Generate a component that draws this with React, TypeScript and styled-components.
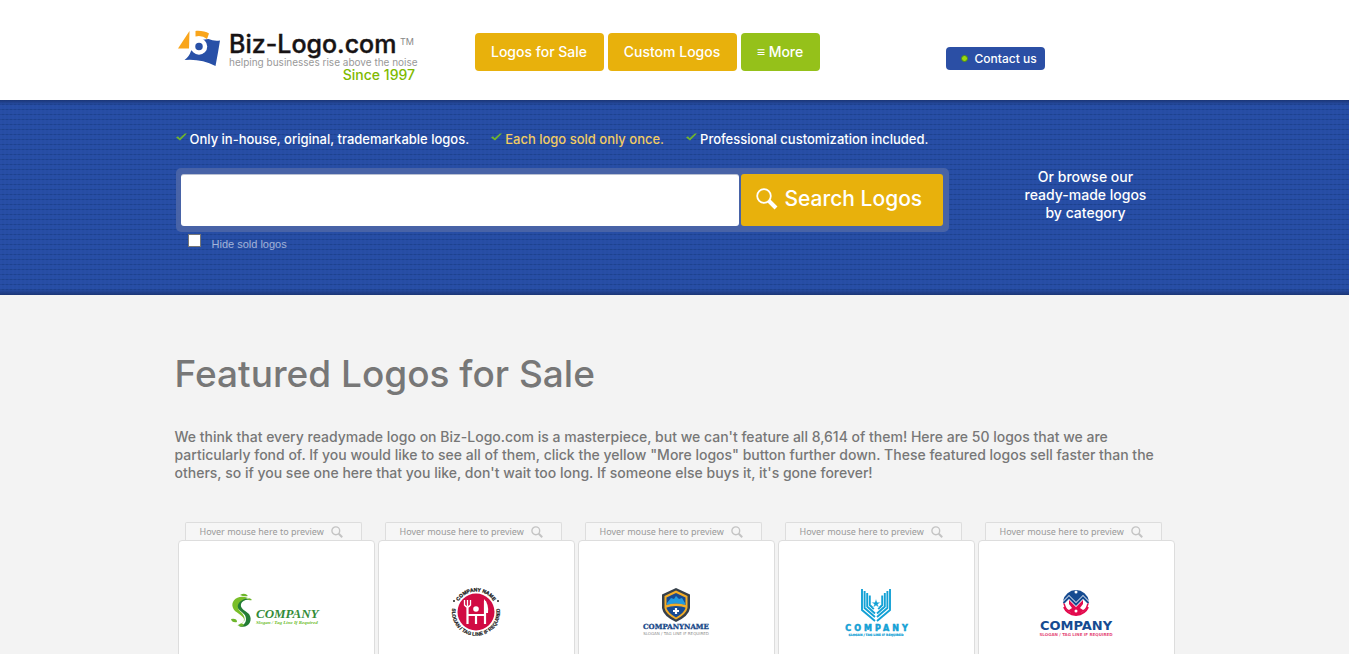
import React from "react";
import styled, { createGlobalStyle } from "styled-components";

const Global = createGlobalStyle`
  *, *::before, *::after { box-sizing: border-box; }
  body { margin: 0; background: #f3f3f3; font-family: Inter, "Liberation Sans", sans-serif; color: #777; }
`;
const Container = styled.div`max-width: 1000px; margin: 0 auto;`;
const Header = styled.header`background: #fff;`;
const HeaderRow = styled(Container)`display: flex; align-items: flex-start; padding-bottom: 14px;`;
const Brand = styled.a`display: block; width: 300px; padding-top: 20px; text-decoration: none; svg { display: block; }`;
const Nav = styled.nav`display: flex; gap: 4px; padding-top: 33px; width: 471px;`;
const NavButton = styled.button<{ $green?: boolean; $wide: number }>`
  width: ${p => p.$wide}px; height: 38px; padding: 0; border: 0; border-radius: 4px;
  background: ${p => (p.$green ? "#95c11a" : "#e8b10c")}; color: #fff;
  font: 500 14px/38px Inter, sans-serif; white-space: nowrap;
`;
const Contact = styled.a`
  display: flex; align-items: center; gap: 7px; margin-top: 47px; width: 99px; height: 23px; padding-left: 15px;
  border-radius: 4px; background: #2b4fa5; color: #fff; font-size: 12px; font-weight: 500; text-decoration: none; white-space: nowrap;
`;
const Dot = styled.span`width: 7px; height: 7px; border-radius: 50%; background: #9bd80d; border: 1px solid #4e8a1c;`;
const Hero = styled.section`
  padding: 30px 0 41px;
  background:
    linear-gradient(#1b3677, transparent 5px),
    linear-gradient(transparent calc(100% - 6px), #1b3677),
    repeating-linear-gradient(90deg, rgba(43,80,170,.35) 0 2px, transparent 2px 4px),
    repeating-linear-gradient(#264da4 0 4px, #1d428f 4px 5px);
`;
const HeroRow = styled(Container)`display: flex;`;
const SearchColumn = styled.div`flex: none; width: 774px; padding-left: 1px;`;
const Points = styled.ul`display: flex; gap: 22px; margin: 0; padding: 0; list-style: none; height: 38px;`;
const Point = styled.li<{ $gold?: boolean }>`
  display: flex; align-items: flex-start; gap: 3px; font-size: 13px; font-weight: 500; line-height: 18px; white-space: nowrap;
  color: ${p => (p.$gold ? "#f2cb62" : "#fff")};
  svg { margin-top: 1px; }
`;
const SearchForm = styled.form`display: flex; gap: 2px; padding: 6px 6px 6px 5px; background: #4863a7; border-radius: 5px;`;
const SearchInput = styled.input`flex: 1; min-width: 0; height: 52px; border: 0; border-top: 1px solid #b9c0d2; border-radius: 3px; background: #fff; padding: 0 12px; font-size: 24px;`;
const SearchButton = styled.button`
  display: flex; align-items: center; gap: 7px; width: 202px; height: 52px; padding: 0 0 2px 15px;
  border: 0; border-radius: 3px; background: #e8b10c; color: #fff; font: 500 21px/26px Inter, sans-serif; white-space: nowrap;
`;
const HideSold = styled.label`display: flex; align-items: flex-start; gap: 11px; padding: 2px 0 0 12px; font: 11px/20px "Liberation Sans", sans-serif; color: #a3b3d8;`;
const Tick = styled.input`appearance: none; width: 13px; height: 13px; margin: 0; background: #fff; border: 1px solid #767676;`;
const Browse = styled.p`flex: 1; margin: 38px 0 0; padding: 0 0 0 48px; text-align: center; color: #fff; font-size: 14px; font-weight: 500; line-height: 18px; white-space: nowrap;`;
const Featured = styled.main`padding-top: 54px;`;
const Title = styled.h1`margin: 0; font-size: 37px; line-height: 50px; font-weight: 500; color: #777;`;
const Intro = styled.p`margin: 29px 0 40px; font-size: 14px; line-height: 18px; font-weight: 500; color: #777; white-space: nowrap;`;
const Grid = styled.div`display: grid; grid-template-columns: repeat(5, 1fr); gap: 3px; padding-left: 3px;`;
const Item = styled.article`min-width: 0;`;
const Hint = styled.div`
  display: flex; align-items: center; gap: 7px; height: 18px; margin: 0 13px 0 7px; padding-left: 14px;
  border: 1px solid #ddd; border-bottom: 0; border-radius: 2px 2px 0 0; background: #f6f6f6;
  color: #999; font: 9px/16px "Noto Sans", sans-serif; white-space: nowrap;
`;
const Card = styled.a`display: flex; justify-content: center; padding: 40px 0 56px; background: #fff; border: 1px solid #ddd; border-radius: 4px;`;

const Check = () => (
  <svg width="11" height="12" viewBox="0 0 11 12"><path d="M0 6.500 2 5.200l1.600 2L8.800 2.500H11L4 9.500Z" fill="#6fb52c" /></svg>
);
const Glass = () => (
  <svg width="12" height="12" viewBox="0 0 12 12" fill="none" stroke="#c4c4c4"><circle cx="4.8" cy="4.8" r="3.9" strokeWidth="1.4" /><path d="m7.8 7.8 3.4 3.4" strokeWidth="2" /></svg>
);

const BrandMark = () => (
  <svg width="245" height="66" viewBox="0 0 245 66" fontFamily="Inter, sans-serif">
    <path d="M14.500 11 3 28.500H14Z" fill="#f9a51b" />
    <path d="M20.500 11C25 10.500 31 11.500 34 13.500L32 19Q27 15 20.500 16.500Z" fill="#f9a51b" />
    <path d="M33.500 19Q39 21.500 45 20.500Q43 33 40.500 46Q26 38.500 9.500 40Q14 37 16 31L26 20Z" fill="#2850a7" />
    <path d="M15.500 11H20V27H15.500Z" fill="#fff" />
    <circle cx="24" cy="26.500" r="6" fill="#2850a7" stroke="#fff" strokeWidth="4.500" />
    <text x="54" y="33" fontSize="25" fontWeight="500" fill="#171314" stroke="#171314" strokeWidth=".4">Biz-Logo.com</text>
    <text x="225" y="25" fontSize="9" fill="#888">TM</text>
    <text x="54" y="46" fontSize="10" fill="#999">helping businesses rise above the noise</text>
    <text x="240" y="60" fontSize="14" fontWeight="500" textAnchor="end" fill="#7eb900">Since 1997</text>
  </svg>
);

const SwirlLogo = () => (
  <svg width="100" height="60" viewBox="0 0 100 60">
    <path d="M24 19C16 14 7 19 11 26C14 31 20 32 20 38C20 43 16 46 11 44C21 50 28 40 23 33C19 29 14 28 15 23C16 20 20 18 24 19Z" fill="#237d35" />
    <path d="M22 17C12 13 4 20 7 27C9 32 16 33 18 38C18 42 16 43 14 43C21 41 19 35 15 31C10 27 10 20 22 17Z" fill="#79be29" />
    <path d="M14 14q5-3 8 1q-4 1-8-1M21 18q3-2 5 1q-3 1-5-1M5 38q6-1 6 3q-5 1-6-3M12 44q4-3 6 0q-3 3-6 0" fill="#6db62b" />
    <text x="30" y="37" fontSize="13" fontStyle="italic" fontWeight="700" fontFamily="Liberation Serif, serif" fill="#338b38">COMPANY</text>
    <text x="30" y="43" fontSize="5" fontStyle="italic" fontWeight="700" fontFamily="Liberation Serif, serif" fill="#6ebd2b">Slogan / Tag Line If Required</text>
  </svg>
);
const DinnerLogo = () => (
  <svg width="60" height="64" viewBox="0 0 60 64" fontFamily="Liberation Sans, sans-serif" fontWeight="700" fill="#222">
    <circle cx="30" cy="31" r="18.500" fill="#d10b43" />
    <path d="M21.500 26v17M22 34h17M39 20v23M30 34v9" fill="none" stroke="#fff" strokeWidth="2.200" />
    <path d="M18.500 19v5q3 4 6 0v-5M21.500 19v6" fill="none" stroke="#fff" strokeWidth="1.300" />
    <path d="M38 18q5 5 4 14h-4Z" fill="#fff" />
    <circle cx="30" cy="28" r="2.800" fill="#fff" />
    <circle cx="8" cy="20" r="1" /><circle cx="52" cy="20" r="1" />
    <path id="nameArc" d="M9.500 31A20.500 20.500 0 0 1 50.500 31" fill="none" />
    <path id="sloganArc" d="M7.400 22.800A24 24 0 1 0 52.600 22.800" fill="none" />
    <text fontSize="5" stroke="#222" strokeWidth=".3"><textPath href="#nameArc" startOffset="50%" textAnchor="middle">COMPANY NAME</textPath></text>
    <text fontSize="5" stroke="#222" strokeWidth=".2"><textPath href="#sloganArc" startOffset="50%" textAnchor="middle">SLOGAN / TAG LINE IF REQUIRED</textPath></text>
  </svg>
);
const ShieldLogo = () => (
  <svg width="76" height="60" viewBox="0 0 76 60" textAnchor="middle">
    <path d="m38 7 14 6.500V27q-1 8-14 14Q25 35 24 27V13.500Z" fill="#37404a" />
    <path d="m38 9.500 11.500 5.500V27q-1 6-11.500 11.500Q27.500 33 26.500 27V15Z" fill="#f3ad28" />
    <path d="m38 12 9.500 4.500v10.500q-1 4.500-9.500 9.500-8.500-5-9.500-9.500V16.500Z" fill="#174a92" />
    <path d="m29 22 4-5 3 1 2-3 3 3 3-1 3 5v2q-9-3-18 0Z" fill="#229be0" />
    <path d="M27 24.500q11-4 22 0v2.500q-11-4-22 0Z" fill="#f3ad28" />
    <path d="M35 30h6M38 27v6" stroke="#fff" strokeWidth="2.200" />
    <text x="38" y="48" fontSize="7" fontWeight="700" fontFamily="DejaVu Serif, serif" fill="#184889" stroke="#184889" strokeWidth=".3">COMPANYNAME</text>
    <text x="38" y="54" fontSize="4" fontFamily="DejaVu Sans, sans-serif" fill="#8b8b8b">SLOGAN / TAG LINE IF REQUIRED</text>
  </svg>
);
const WingLogo = () => (
  <svg width="76" height="60" viewBox="0 0 76 60" textAnchor="middle" fill="#13a1d5" fontFamily="DejaVu Sans, sans-serif">
    <path d="M24 8v21l13 11M26.600 10v17l10.400 9M29.200 12v13.500l7.800 7M31.800 14.500v9.500l4 4M52 8v21L39 40M49.400 10v17L39 36M46.800 12v13.500l-7.800 7M44.200 14.500v9.500l-4 4" fill="none" stroke="#13a1d5" strokeWidth="1.900" />
    <path d="m38 18 1.200 3.300h3.300l-2.700 2 1 3.300-2.800-2-2.800 2 1-3.300-2.700-2h3.300Z" stroke="#fff" strokeWidth=".4" />
    <text x="40" y="50" fontSize="8" fontWeight="700" letterSpacing="3" stroke="#13a1d5" strokeWidth=".5">COMPANY</text>
    <text x="38" y="55" fontSize="3" fontWeight="700" stroke="#13a1d5" strokeWidth=".2">SLOGAN / TAG LINE IF REQUIRED</text>
  </svg>
);
const RoundLogo = () => (
  <svg width="84" height="60" viewBox="0 0 84 60" textAnchor="middle" fontFamily="DejaVu Sans, sans-serif">
    <path d="M29 20a13.200 13.200 0 0 1 26 0l-6-6-7 7-7-7Z" fill="#164b91" />
    <path d="m29.500 22 5.500-5.500 7 7 7-7 5.500 5.500" fill="none" stroke="#164b91" strokeWidth="2" />
    <path d="M29 22a13.200 13.200 0 0 0 26 0l-2 1q-1 5-4 6l-3-2 3-4v-4l-7 7-7-7v4l3 4-3 2q-3-1-4-6Z" fill="#e30b4e" />
    <path d="M30 26q3 7 12 8q9-1 12-8" fill="none" stroke="#e30b4e" strokeWidth="2" />
    <path d="M36 31l6-5 6 5q-6 5-12 0" fill="#e30b4e" />
    <circle cx="42" cy="11" r="1.500" fill="#fff" /><circle cx="42" cy="30" r="1.500" fill="#fff" />
    <text x="42" y="49" fontSize="13" fontWeight="700" fill="#164b91">COMPANY</text>
    <text x="42" y="55" fontSize="4" fontWeight="700" fill="#e54b79">SLOGAN / TAG LINE IF REQUIRED</text>
  </svg>
);

const logos = [SwirlLogo, DinnerLogo, ShieldLogo, WingLogo, RoundLogo];

export default function App() {
  return (
    <>
      <Global />
      <Header>
        <HeaderRow>
          <Brand href="#home"><BrandMark /></Brand>
          <Nav>
            <NavButton $wide={129}>Logos for Sale</NavButton>
            <NavButton $wide={129}>Custom Logos</NavButton>
            <NavButton $wide={79} $green>≡ More</NavButton>
          </Nav>
          <Contact href="#contact"><Dot />Contact us</Contact>
        </HeaderRow>
      </Header>
      <Hero>
        <HeroRow>
          <SearchColumn>
            <Points>
              <Point><Check />Only in-house, original, trademarkable logos.</Point>
              <Point $gold><Check />Each logo sold only once.</Point>
              <Point><Check />Professional customization included.</Point>
            </Points>
            <SearchForm>
              <SearchInput type="text" aria-label="Search logos" />
              <SearchButton type="button">
                <svg width="22" height="22" viewBox="0 0 22 22" fill="none" stroke="#fff"><circle cx="8" cy="8" r="6.800" strokeWidth="1.800" /><path d="m13 13 7 7" strokeWidth="4" /></svg>
                Search Logos
              </SearchButton>
            </SearchForm>
            <HideSold><Tick type="checkbox" />Hide sold logos</HideSold>
          </SearchColumn>
          <Browse>Or browse our<br />ready-made logos<br />by category</Browse>
        </HeroRow>
      </Hero>
      <Featured>
        <Container>
          <Title>Featured Logos for Sale</Title>
          <Intro>
            We think that every readymade logo on Biz-Logo.com is a masterpiece, but we can't feature all 8,614 of them! Here are 50 logos that we are<br />
            particularly fond of. If you would like to see all of them, click the yellow "More logos" button further down. These featured logos sell faster than the<br />
            others, so if you see one here that you like, don't wait too long. If someone else buys it, it's gone forever!
          </Intro>
          <Grid>
            {logos.map((Logo, i) => (
              <Item key={i}>
                <Hint>Hover mouse here to preview<Glass /></Hint>
                <Card href={`#logo-${i + 1}`}><Logo /></Card>
              </Item>
            ))}
          </Grid>
        </Container>
      </Featured>
    </>
  );
}
